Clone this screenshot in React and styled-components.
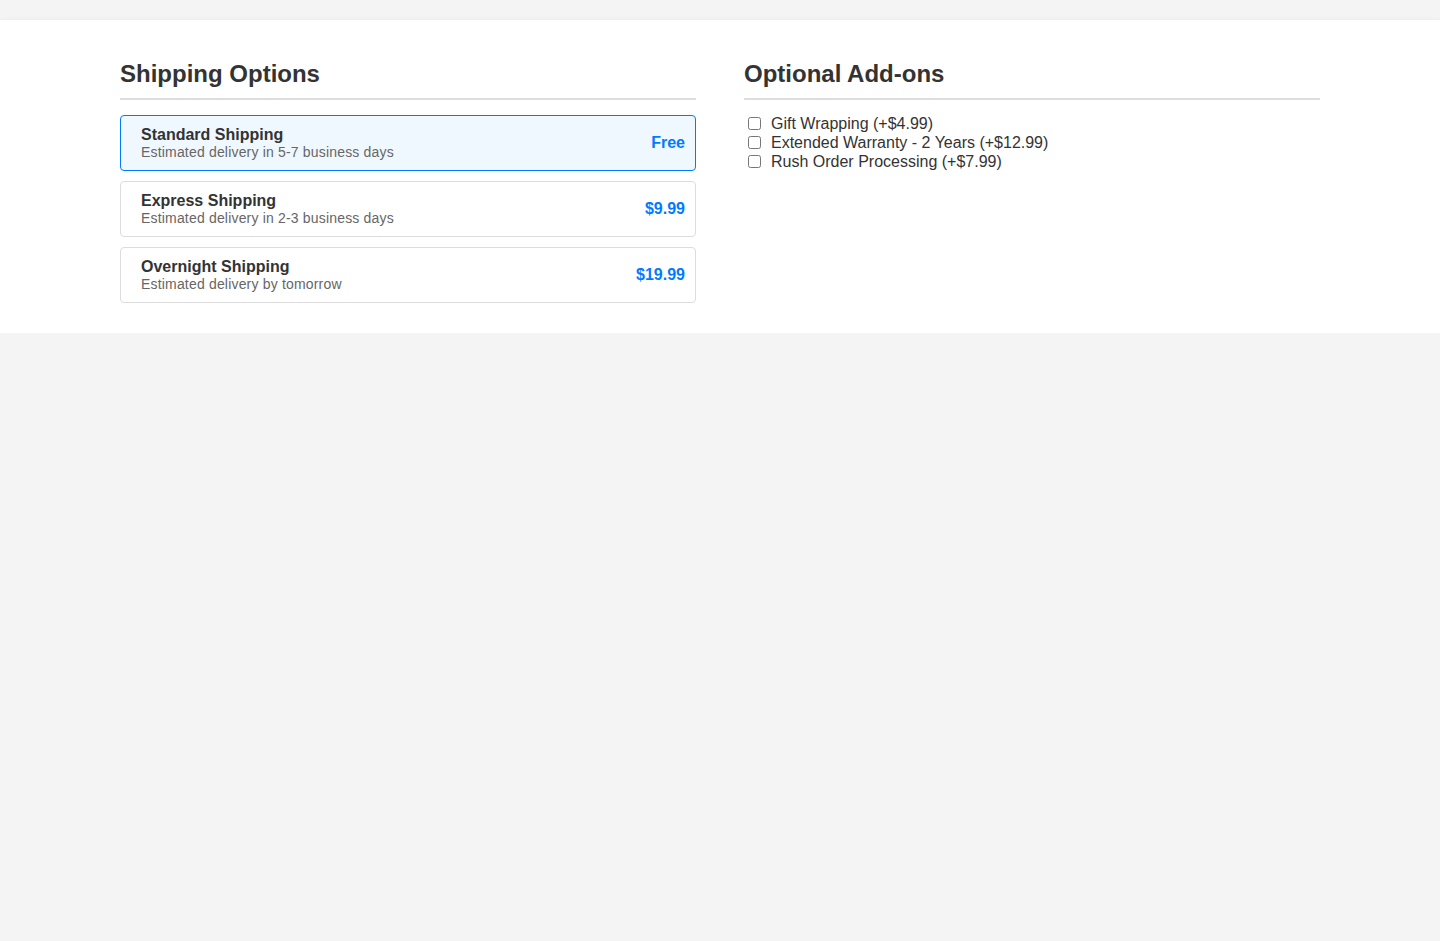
import React, { useState } from "react";
import styled, { createGlobalStyle } from "styled-components";

const Global = createGlobalStyle`
  html, body { margin: 0; padding: 0; background: #f4f4f4; }
  body { font-family: "Liberation Sans", Arial, Helvetica, sans-serif; color: #333; padding-top: 20px; }
  * { box-sizing: border-box; }
`;

const Panel = styled.div`
  background: #fff;
  box-shadow: 0 2px 6px rgba(0, 0, 0, 0.1);
  padding: 40px 0 30px;
`;

const Container = styled.div`
  max-width: 1200px;
  margin: 0 auto;
  display: grid;
  grid-template-columns: 1fr 1fr;
  gap: 48px;
`;

const Section = styled.section``;

const Heading = styled.h2`
  margin: 0 0 15px;
  font-size: 24px;
  line-height: 28px;
  font-weight: bold;
  color: #333;
  padding-bottom: 10px;
  border-bottom: 2px solid #ddd;
`;

const OptionList = styled.div`
  display: flex;
  flex-direction: column;
  gap: 10px;
`;

const Option = styled.div`
  display: flex;
  align-items: center;
  justify-content: space-between;
  padding: 10px 10px 10px 20px;
  border: 1px solid ${p => (p.$selected ? "#007bff" : "#ddd")};
  background: ${p => (p.$selected ? "#f0f8ff" : "#fff")};
  border-radius: 4px;
  cursor: pointer;
`;

const Info = styled.div`
  display: flex;
  flex-direction: column;
`;

const Title = styled.div`
  font-size: 16px;
  line-height: 18px;
  font-weight: bold;
  color: #333;
`;

const Sub = styled.div`
  font-size: 14px;
  line-height: 16px;
  color: #666;
  letter-spacing: 0.18px;
`;

const Price = styled.div`
  font-size: 16px;
  font-weight: bold;
  color: #007bff;
`;

const AddonList = styled.div`
  display: flex;
  flex-direction: column;
  margin-top: -1px;
`;

const AddonLabel = styled.label`
  display: flex;
  align-items: center;
  font-size: 16px;
  line-height: 19px;
  color: #333;
`;

const Check = styled.input`
  width: 13px;
  height: 13px;
  margin: 3px 10px 3px 4px;
`;

const shipping = [
  { name: "Standard Shipping", desc: "Estimated delivery in 5-7 business days", price: "Free" },
  { name: "Express Shipping", desc: "Estimated delivery in 2-3 business days", price: "$9.99" },
  { name: "Overnight Shipping", desc: "Estimated delivery by tomorrow", price: "$19.99" },
];

const addons = [
  "Gift Wrapping (+$4.99)",
  "Extended Warranty - 2 Years (+$12.99)",
  "Rush Order Processing (+$7.99)",
];

export default function App() {
  const [sel, setSel] = useState(0);
  return (
    <>
      <Global />
      <Panel>
        <Container>
          <Section>
            <Heading>Shipping Options</Heading>
            <OptionList>
              {shipping.map((s, i) => (
                <Option key={s.name} $selected={sel === i} onClick={() => setSel(i)}>
                  <Info>
                    <Title>{s.name}</Title>
                    <Sub>{s.desc}</Sub>
                  </Info>
                  <Price>{s.price}</Price>
                </Option>
              ))}
            </OptionList>
          </Section>
          <Section>
            <Heading>Optional Add-ons</Heading>
            <AddonList>
              {addons.map(a => (
                <AddonLabel key={a}>
                  <Check type="checkbox" />
                  {a}
                </AddonLabel>
              ))}
            </AddonList>
          </Section>
        </Container>
      </Panel>
    </>
  );
}
